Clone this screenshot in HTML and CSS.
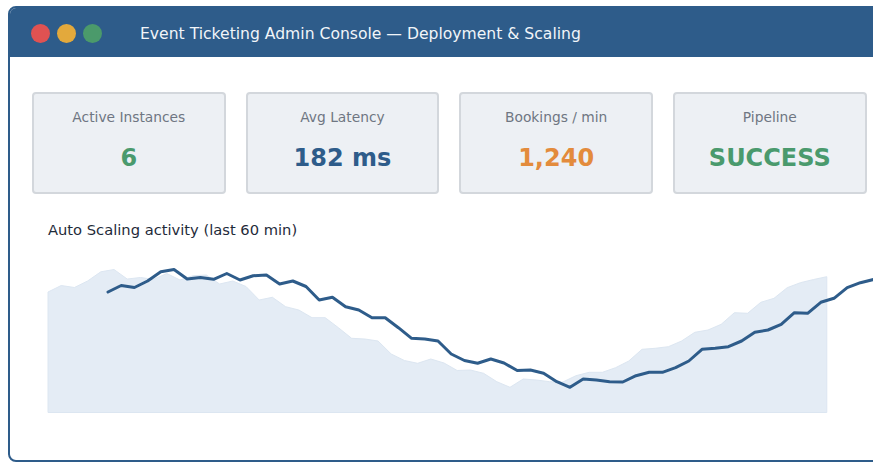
FILE: index.html
```html
<!DOCTYPE html>
<html lang="en">
<head>
<meta charset="utf-8">
<title>Event Ticketing Admin Console</title>
<link rel="stylesheet" href="styles.css">
</head>
<body>
<div class="window">
  <header class="titlebar">
    <div class="dots">
      <span class="dot dot-red"></span>
      <span class="dot dot-yellow"></span>
      <span class="dot dot-green"></span>
    </div>
    <div class="title">Event Ticketing Admin Console — Deployment &amp; Scaling</div>
  </header>
  <main class="content">
    <section class="stats">
      <div class="card">
        <div class="card-label">Active Instances</div>
        <div class="card-value value-green">6</div>
      </div>
      <div class="card">
        <div class="card-label">Avg Latency</div>
        <div class="card-value value-blue">182 ms</div>
      </div>
      <div class="card">
        <div class="card-label">Bookings / min</div>
        <div class="card-value value-orange">1,240</div>
      </div>
      <div class="card">
        <div class="card-label">Pipeline</div>
        <div class="card-value value-green">SUCCESS</div>
      </div>
    </section>
    <section class="chart">
      <div class="chart-title">Auto Scaling activity (last 60 min)</div>
      <svg class="chart-svg" width="840" height="170" viewBox="0 0 840 170">
        <!-- requests per minute, shaded -->
        <polygon class="area" points="0,162.5 0,42 13.2,35.5 26.4,37.5 39.6,31 52.8,21.8 66,19.5 79.2,29 92.4,27.5 105.6,29.3 118.8,23.5 132,30 145.2,25.7 158.4,25 171.6,34 184.8,31 198,36.5 211.2,50 224.4,47.3 237.6,56.7 250.8,60 264,67.7 277.2,67.7 290.4,77.7 303.6,88.3 316.8,89 330,91 343.2,104 356.4,110.5 369.6,113.3 382.8,109 396,113 409.2,120.5 422.4,120 435.6,123.3 448.8,131.7 462,137.3 475.2,129 488.4,130 501.6,131.7 514.8,132 528,125.7 541.2,122.3 554.4,122.3 567.6,117.7 580.8,111 594,99.3 607.2,98.3 620.4,96.7 633.6,91 646.8,82.3 660,80 673.2,74.3 686.4,62.7 699.6,63.3 712.8,52.3 726,48.3 739.2,37.7 752.4,32.7 765.6,29.5 778.8,26.7 778.8,162.5"/>
        <!-- instance count trend, lagging the load -->
        <polyline class="line" transform="translate(60 0)" points="0,42 13.2,35.5 26.4,37.5 39.6,31 52.8,21.8 66,19.5 79.2,29 92.4,27.5 105.6,29.3 118.8,23.5 132,30 145.2,25.7 158.4,25 171.6,34 184.8,31 198,36.5 211.2,50 224.4,47.3 237.6,56.7 250.8,60 264,67.7 277.2,67.7 290.4,77.7 303.6,88.3 316.8,89 330,91 343.2,104 356.4,110.5 369.6,113.3 382.8,109 396,113 409.2,120.5 422.4,120 435.6,123.3 448.8,131.7 462,137.3 475.2,129 488.4,130 501.6,131.7 514.8,132 528,125.7 541.2,122.3 554.4,122.3 567.6,117.7 580.8,111 594,99.3 607.2,98.3 620.4,96.7 633.6,91 646.8,82.3 660,80 673.2,74.3 686.4,62.7 699.6,63.3 712.8,52.3 726,48.3 739.2,37.7 752.4,32.7 765.6,29.5 778.8,26.7"/>
      </svg>
    </section>
  </main>
</div>
</body>
</html>
```
FILE: styles.css
```css
html, body {
  margin: 0;
  padding: 0;
  background: #ffffff;
  overflow: hidden;
}

body {
  font-family: "DejaVu Sans", "Liberation Sans", sans-serif;
  width: 873px;
  height: 462px;
}

.window {
  box-sizing: border-box;
  margin: 6px 0 0 8px;
  width: 890px;
  height: 456px;
  border: 2px solid #2e5c8a;
  border-radius: 8px;
  background: #ffffff;
  overflow: hidden;
}

.titlebar {
  height: 49px;
  background: #2e5c8a;
  display: flex;
  align-items: center;
  padding-left: 21px;
  padding-top: 2px;
  box-sizing: border-box;
}

.dots {
  display: flex;
  gap: 7px;
}

.dot {
  width: 19px;
  height: 19px;
  border-radius: 50%;
}

.dot-red { background: #e05252; }
.dot-yellow { background: #e3a93c; }
.dot-green { background: #4b9a6b; }

.title {
  margin-left: 38px;
  color: #f1f5f9;
  font-size: 15.6px;
}

.content {
  padding: 35px 22px 0 22px;
}

.stats {
  display: grid;
  grid-template-columns: repeat(4, 193.67px);
  column-gap: 20px;
}

.card {
  box-sizing: border-box;
  height: 102px;
  background: #edf0f4;
  border: 2px solid #d3d7dc;
  border-radius: 4px;
  padding-top: 14px;
  text-align: center;
}

.card-label {
  font-size: 13.8px;
  line-height: 18px;
  color: #6f7682;
}

.card-value {
  margin-top: 18px;
  font-size: 24px;
  line-height: 29px;
  font-weight: bold;
}

.value-green { color: #4a9a6d; }
.value-blue { color: #2e5c8a; }
.value-orange { color: #e38b3c; }

.chart {
  padding-left: 16px;
  margin-top: 27px;
}

.chart-title {
  font-size: 14.7px;
  line-height: 18px;
  color: #1f2b3a;
}

.chart-svg {
  display: block;
  margin-top: 11px;
  overflow: visible;
}

.area {
  fill: #e4ecf5;
  stroke: #dce6f1;
  stroke-width: 1;
}

.line {
  fill: none;
  stroke: #2e5c8a;
  stroke-width: 3;
  stroke-linejoin: round;
  stroke-linecap: round;
}
```
